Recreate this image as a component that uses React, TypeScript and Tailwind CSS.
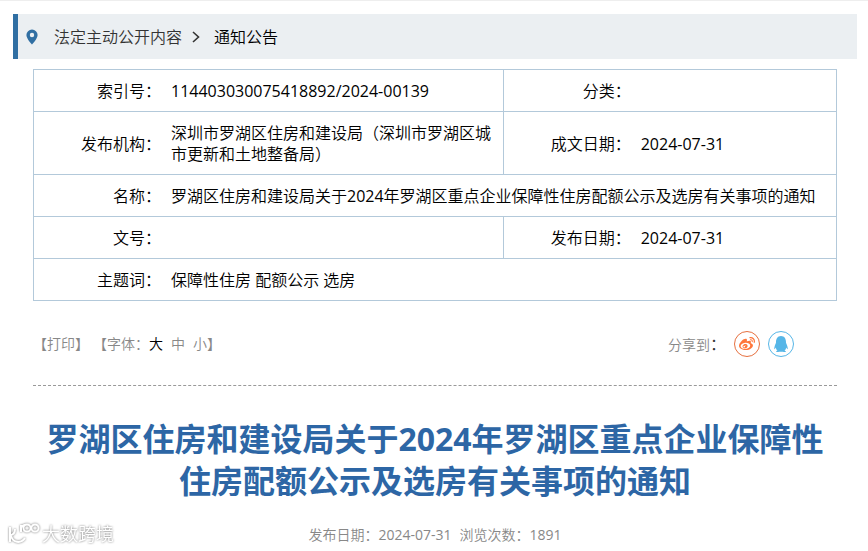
import type { ReactNode } from "react";
import { FaQq, FaWeibo } from "react-icons/fa";

function Label({ children }: { children: ReactNode }) {
  return (
    <th scope="row" className="border border-r-0 border-[#b3c9da] pb-[9px] pr-[5px] pt-[11px] text-right font-normal">
      {children}
    </th>
  );
}

function Value({ children, span }: { children?: ReactNode; span?: number }) {
  return (
    <td colSpan={span} className="border border-l-0 border-[#b3c9da] pb-[9px] pl-[5px] pr-1 pt-[11px]">
      {children}
    </td>
  );
}

function Breadcrumb() {
  return (
    <nav
      aria-label="当前位置"
      className="ml-[13px] mr-[11px] mt-[13px] flex h-[45px] items-center border-l-[5px] border-[#306fa3] bg-[#ebeff2] pl-[8px]"
    >
      <svg viewBox="0 0 12 16" className="h-4 w-3 fill-[#306fa3]" aria-hidden="true">
        <path
          fillRule="evenodd"
          d="M6 .5A5.6 5.6 0 0 0 .4 6.1C.4 10 6 15.500 6 15.500S11.600 10 11.600 6.100A5.600 5.600 0 0 0 6 .5ZM6 3.800a2.200 2.200 0 1 1 0 4.400 2.200 2.200 0 0 1 0-4.400Z"
        />
      </svg>
      <a href="#open" className="ml-4 text-[#333]">
        法定主动公开内容
      </a>
      <svg viewBox="0 0 8 12" className="mx-[10px] h-3 w-2 fill-none stroke-[#333]" strokeWidth="1.6" aria-hidden="true">
        <path d="M1 1l5.500 5L1 11" />
      </svg>
      <a href="#notice" className="ml-1 text-black">
        通知公告
      </a>
    </nav>
  );
}

function InfoTable() {
  return (
    <table className="mt-[10px] w-full table-fixed border-collapse leading-[21px] text-black">
      <colgroup>
        <col className="w-[16.5%]" />
        <col className="w-[42%]" />
        <col className="w-[16.5%]" />
        <col className="w-[25%]" />
      </colgroup>
      <tbody>
        <tr>
          <Label>索引号：</Label>
          <Value>114403030075418892/2024-00139</Value>
          <Label>分类：</Label>
          <Value />
        </tr>
        <tr>
          <Label>发布机构：</Label>
          <Value>深圳市罗湖区住房和建设局（深圳市罗湖区城市更新和土地整备局）</Value>
          <Label>成文日期：</Label>
          <Value>2024-07-31</Value>
        </tr>
        <tr>
          <Label>名称：</Label>
          <Value span={3}>罗湖区住房和建设局关于2024年罗湖区重点企业保障性住房配额公示及选房有关事项的通知</Value>
        </tr>
        <tr>
          <Label>文号：</Label>
          <Value />
          <Label>发布日期：</Label>
          <Value>2024-07-31</Value>
        </tr>
        <tr>
          <Label>主题词：</Label>
          <Value span={3}>保障性住房 配额公示 选房</Value>
        </tr>
      </tbody>
    </table>
  );
}

function Toolbar() {
  return (
    <div className="mt-[30px] flex items-center justify-between border-b border-dashed border-[#999] pb-7 pr-[43px] text-sm text-[#888]">
      <div className="flex gap-1">
        <button type="button">【打印】</button>
        <div className="flex">
          <span>【字体：</span>
          <span className="flex gap-2">
            <button type="button" className="text-black">大</button>
            <button type="button">中</button>
            <button type="button">小</button>
          </span>
          <span>】</span>
        </div>
      </div>
      <div className="flex items-center gap-2">
        <span>
          分享到<span className="text-base text-[#333]">：</span>
        </span>
        <a
          href="#weibo"
          aria-label="分享到微博"
          className="flex size-[26px] items-center justify-center rounded-full border border-[#e6703f] text-[#ff763b]"
        >
          <FaWeibo className="size-4" />
        </a>
        <a
          href="#qq"
          aria-label="分享到QQ"
          className="flex size-[26px] items-center justify-center rounded-full border border-[#56b6e7] text-[#56b6e7]"
        >
          <FaQq className="size-4" />
        </a>
      </div>
    </div>
  );
}

function Watermark() {
  return (
    <div className="absolute bottom-[3px] left-[8px] flex items-center gap-[2px] text-white drop-shadow-[0_0_1px_#777]">
      <svg viewBox="0 0 32 24" className="h-6 w-8 fill-none stroke-white" strokeWidth="2" aria-hidden="true">
        <path d="M2 5v15M2 13c3 0 5-2 5-6M3 13c1 8 10 9 14 3" />
        <path d="M13 10V3M13 6c1-2 2-3 4-3" />
        <circle cx="19" cy="6" r="3.600" />
        <circle cx="27" cy="6" r="3.600" />
      </svg>
      <span className="text-lg font-medium leading-6">大数跨境</span>
    </div>
  );
}

export default function App() {
  return (
    <div
      lang="zh-CN"
      className="relative border-t border-[#eee] bg-white pb-1 font-['Open_Sans','Noto_Sans_CJK_SC_DemiLight','Noto_Sans_CJK_SC',sans-serif] text-base"
    >
      <Breadcrumb />
      <main className="ml-[33px] mr-[31px]">
        <InfoTable />
        <Toolbar />
        <h1 className="mt-8 text-center font-['Open_Sans','Noto_Sans_CJK_SC',sans-serif] text-[32px] font-bold leading-[42px] text-[#2d66a5]">
          罗湖区住房和建设局关于2024年罗湖区重点企业保障性住房配额公示及选房有关事项的通知
        </h1>
        <p className="mt-[22px] flex justify-center gap-2 text-sm leading-[21px] text-[#888]">
          <span>发布日期：2024-07-31</span>
          <span>浏览次数：1891</span>
        </p>
      </main>
      <Watermark />
    </div>
  );
}
